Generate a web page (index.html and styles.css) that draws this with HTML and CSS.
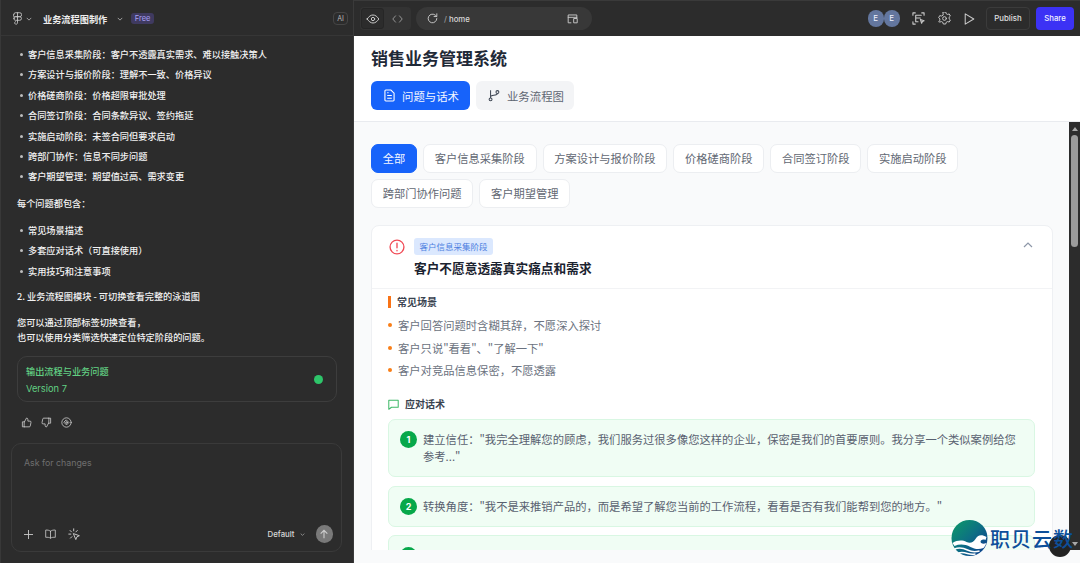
FILE: index.html
```html
<!DOCTYPE html>
<html lang="zh-CN">
<head>
<meta charset="utf-8">
<title>业务流程图制作</title>
<link rel="stylesheet" href="styles.css">
</head>
<body>
<div class="app">
  <aside class="side">
    <header class="side-head">
      <svg class="ic figma" viewBox="0 0 12 18" width="9" height="13"><path d="M1 3a2 2 0 0 1 2-2h6a2 2 0 0 1 0 5.500H3A2 2 0 0 1 1 3zM6 1v10.500M1 9a2 2 0 0 1 2-2.500h6a2.300 2.300 0 0 1 0 5H3A2.200 2.200 0 0 1 1 9zM6 11.500V15a2 2 0 1 1-3-1.800"/></svg>
      <svg class="chev" viewBox="0 0 8 5" width="6" height="4"><path d="M1 1l3 3 3-3"/></svg>
      <span class="proj">业务流程图制作</span>
      <svg class="chev chev-proj" viewBox="0 0 8 5" width="6" height="4"><path d="M1 1l3 3 3-3"/></svg>
      <span class="free">Free</span>
      <span class="ai">AI</span>
    </header>
    <div class="msg">
      <ul class="list">
        <li>客户信息采集阶段：客户不透露真实需求、难以接触决策人</li>
        <li>方案设计与报价阶段：理解不一致、价格异议</li>
        <li>价格磋商阶段：价格超限审批处理</li>
        <li>合同签订阶段：合同条款异议、签约拖延</li>
        <li>实施启动阶段：未签合同但要求启动</li>
        <li>跨部门协作：信息不同步问题</li>
        <li>客户期望管理：期望值过高、需求变更</li>
      </ul>
      <p class="para para-a">每个问题都包含：</p>
      <ul class="list list-b">
        <li>常见场景描述</li>
        <li>多套应对话术（可直接使用）</li>
        <li>实用技巧和注意事项</li>
      </ul>
      <p class="para para-c">2. 业务流程图模块 - 可切换查看完整的泳道图</p>
      <p class="para para-d">您可以通过顶部标签切换查看，<br>也可以使用分类筛选快速定位特定阶段的问题。</p>
      <div class="version">
        <div>
          <div class="v-title">输出流程与业务问题</div>
          <div class="v-num">Version 7</div>
        </div>
        <span class="v-dot"></span>
      </div>
      <div class="fb">
        <svg class="ic" viewBox="0 0 16 16" width="11" height="11"><path d="M5 7l3-5.500c1.300 0 2 .8 2 2V6h3a1.500 1.500 0 0 1 1.500 1.800l-1 5.200a1.500 1.500 0 0 1-1.500 1.300H5zM5 7H2v7.300h3"/></svg>
        <svg class="ic" viewBox="0 0 16 16" width="11" height="11"><path d="M11 9l-3 5.500c-1.300 0-2-.8-2-2V10H3a1.500 1.500 0 0 1-1.500-1.800l1-5.200A1.500 1.500 0 0 1 4 1.700h7zM11 9h3V1.700h-3"/></svg>
        <svg class="ic" viewBox="0 0 16 16" width="11" height="11"><circle cx="8" cy="8" r="6.800"/><path d="M8 4.500L11.500 8 8 11.500 4.500 8z"/><circle cx="8" cy="8" r="1.200"/></svg>
      </div>
    </div>
    <div class="ask">
      <div class="ask-ph">Ask for changes</div>
      <div class="ask-bar">
        <svg class="ic" viewBox="0 0 12 12" width="9" height="9"><path d="M6 .5v11M.5 6h11"/></svg>
        <svg class="ic" viewBox="0 0 16 14" width="11" height="10"><path d="M8 3C6.500 1.500 3.500 1 1 1.300v10.500C3.500 11.500 6.500 12 8 13c1.500-1 4.500-1.500 7-1.200V1.300C12.500 1 9.500 1.500 8 3zM8 3v10"/></svg>
        <svg class="ic" viewBox="0 0 16 16" width="13" height="13"><path d="M7 1v2.500M2.500 3l1.800 1.800M1 7.500h2.500M3 12.500l1.800-1.800M11.500 3L9.700 4.800M7 7l7 2.500-3 1.300-1.200 3z"/></svg>
        <span class="ask-gap"></span>
        <span class="def">Default</span>
        <svg class="chev" viewBox="0 0 8 5" width="5" height="3"><path d="M1 1l3 3 3-3"/></svg>
        <span class="send"><svg class="send-i" viewBox="0 0 12 12" width="10" height="10"><path d="M6 11V1.500M2 5.500l4-4 4 4"/></svg></span>
      </div>
    </div>
  </aside>
  <main class="main">
    <div class="top">
      <div class="seg">
        <span class="seg-on"><svg class="ic" viewBox="0 0 16 12" width="14" height="10"><path d="M1 6c2-3 4.300-4.800 7-4.800S13 3 15 6c-2 3-4.300 4.800-7 4.800S3 9 1 6z"/><circle cx="8" cy="6" r="2"/></svg></span>
        <span class="seg-off"><svg class="ic dim" viewBox="0 0 14 10" width="11" height="8"><path d="M4.500 1L1 5l3.500 4M9.500 1L13 5 9.500 9"/></svg></span>
      </div>
      <div class="addr">
        <svg class="ic" viewBox="0 0 14 14" width="11" height="11"><path d="M12.500 7a5.500 5.500 0 1 1-1.700-4L12.500 4.500M12.500 1v3.500H9"/></svg>
        <span class="path"><span class="slash">/</span> home</span>
        <svg class="ic addr-end" viewBox="0 0 14 14" width="11" height="11"><path d="M5 12.500H1.500v-10h11V6M1.500 5.500h11M9 7h4v5.500H9z"/></svg>
      </div>
      <span class="top-gap"></span>
      <div class="avs"><span class="av">E</span><span class="av av2">E</span></div>
      <svg class="ic tool" viewBox="0 0 14 14" width="13" height="13"><path d="M1 3.500V1h2.500M10.500 1H13v2.500M1 10.500V13h2.500M4 3.500h6M4 3.500v7h2.500M4 6.500h5M9 8l4 1.500-1.800.8-.8 1.800z"/></svg>
      <svg class="ic tool" viewBox="0 0 16 16" width="13" height="13"><path d="M6.500 1h3l.5 2 1.800 1 2-.6 1.400 2.600-1.500 1.400v2l1.500 1.400-1.400 2.600-2-.6-1.800 1-.5 2h-3l-.5-2-1.800-1-2 .6L.8 12.800l1.500-1.400v-2L.8 8 2.200 5.400l2 .6 1.800-1z" transform="translate(0 -1)"/><circle cx="8" cy="8" r="2.300"/></svg>
      <svg class="ic tool" viewBox="0 0 12 14" width="11" height="12"><path d="M1 1l10 6-10 6z"/></svg>
      <span class="btn-pub">Publish</span>
      <span class="btn-share">Share</span>
    </div>
    <div class="page-head">
      <h1 class="title">销售业务管理系统</h1>
      <div class="tabs">
        <span class="tab tab-on"><svg class="tab-i" viewBox="0 0 12 14" width="11" height="13"><path d="M1 2a1 1 0 0 1 1-1h5.500L11 4.500V12a1 1 0 0 1-1 1H2a1 1 0 0 1-1-1zM3.500 7h5M3.500 10h5M3.500 4h1.500"/></svg>问题与话术</span>
        <span class="tab"><svg class="tab-i" viewBox="0 0 14 14" width="12" height="13"><circle cx="3" cy="11.500" r="1.700"/><circle cx="11" cy="3" r="1.700"/><path d="M3 9.800V1M3 8.500c0-2.500 8-.8 8-3.800"/></svg>业务流程图</span>
      </div>
    </div>
    <div class="scroller">
      <div class="content">
        <div class="chips">
          <span class="chip chip-on">全部</span>
          <span class="chip">客户信息采集阶段</span>
          <span class="chip">方案设计与报价阶段</span>
          <span class="chip">价格磋商阶段</span>
          <span class="chip">合同签订阶段</span>
          <span class="chip">实施启动阶段</span>
          <span class="chip">跨部门协作问题</span>
          <span class="chip">客户期望管理</span>
        </div>
        <section class="card">
          <div class="card-head">
            <svg class="alert" viewBox="0 0 18 18" width="16" height="16"><circle cx="9" cy="9" r="7.800"/><path d="M9 4.800v5M9 12.800v.4"/></svg>
            <div class="card-title-wrap">
              <span class="badge">客户信息采集阶段</span>
              <h2 class="card-title">客户不愿意透露真实痛点和需求</h2>
            </div>
            <svg class="card-chev" viewBox="0 0 10 6" width="10" height="6"><path d="M1 5l4-4 4 4"/></svg>
          </div>
          <div class="card-body">
            <h3 class="sec sec-scene">常见场景</h3>
            <ul class="scene">
              <li>客户回答问题时含糊其辞，不愿深入探讨</li>
              <li>客户只说"看看"、"了解一下"</li>
              <li>客户对竞品信息保密，不愿透露</li>
            </ul>
            <h3 class="sec sec-talk"><svg class="talk-i" viewBox="0 0 14 14" width="11" height="11"><path d="M1 1.500h12v9H4.500L1 13z"/></svg>应对话术</h3>
            <div class="answers">
              <div class="ans ans-1"><span class="num">1</span><p>建立信任："我完全理解您的顾虑，我们服务过很多像您这样的企业，保密是我们的首要原则。我分享一个类似案例给您参考..."</p></div>
              <div class="ans"><span class="num">2</span><p>转换角度："我不是来推销产品的，而是希望了解您当前的工作流程，看看是否有我们能帮到您的地方。"</p></div>
              <div class="ans"><span class="num">3</span><p>价值交换："如果您方便，我可以先分享一些同行业的解决方案，您看看哪些对您有参考价值，然后我们再深入交流。"</p></div>
            </div>
          </div>
        </section>
      </div>
      <div class="sbar"><span class="sbar-up"></span><span class="sbar-thumb"></span><span class="sbar-down"></span></div>
    </div>
    <div class="foot"></div>
  </main>
</div>
<div class="mark">
  <svg class="mark-logo" viewBox="0 0 36 36" width="37" height="36">
    <defs><linearGradient id="g" x1="0" y1="0" x2="1" y2="1"><stop offset="0" stop-color="#0c9b66"/><stop offset=".5" stop-color="#0d6f84"/><stop offset="1" stop-color="#0c3590"/></linearGradient></defs>
    <circle cx="18" cy="18" r="18" fill="url(#g)"/>
    <path d="M1 23c5-3 10-3 14-1 4 2 7 0 9-3 2-4 6-5 11-2l-1 3c-3-1-5 0-5 2 1 2 3 2 6 1-1 2-2 4-3 5-5 2-9 1-13-1-6-3-11-3-16-1z" fill="#fff"/>
    <path d="M3 29c5-2 9-1 13 1 4 2 8 2 12 1M7 33c3-1 6-.5 9 .5 3 1 5 1 8 .5" fill="none" stroke="#fff" stroke-width="1.500"/>
  </svg>
  <span class="mark-dot"></span>
  <span class="mark-text">职贝云数</span>
</div>
</body>
</html>
```

FILE: styles.css
```css
* { box-sizing: border-box; }
html, body { margin: 0; padding: 0; height: 100%; overflow: hidden; }
body { font-family: Inter, "Noto Sans CJK SC", sans-serif; background: #2c2c2c; }
ul { margin: 0; padding: 0; list-style: none; }
p, h1, h2, h3 { margin: 0; }
svg { display: block; flex: none; }
.ic { fill: none; stroke: #c9c9c9; stroke-width: 1.200; stroke-linejoin: round; stroke-linecap: round; }
.dim { stroke: #9a9a9a; }
.chev { fill: none; stroke: #b5b5b5; stroke-width: 1.100; }

.app { display: flex; width: 1080px; height: 563px; position: relative; }

/* left panel */
.side { width: 354px; flex: none; display: flex; flex-direction: column; height: 563px; background: #2c2c2c; border-right: 1px solid #3a3a3a; border-left: 1px solid #383838; }
.side-head { height: 36px; display: flex; align-items: center; padding: 2px 5px 0 12px; border-bottom: 1px solid #363636; flex: none; }
.chev { margin-left: 4px; }
.proj { margin-left: 11px; font-size: 9.200px; font-weight: 700; color: #ececec; font-family: "Noto Sans CJK SC", sans-serif; white-space: nowrap; }
.chev-proj { margin-left: 10px; }
.free { margin-left: 8px; height: 11px; padding: 0 3.500px; font-size: 7.500px; line-height: 11px; color: #a9a0f5; background: #3f3a60; border-radius: 3px; }
.ai { margin-left: auto; width: 15px; height: 13px; border: 1px solid #454545; border-radius: 4px; font-size: 7px; line-height: 11px; text-align: center; color: #b5b5b5; }
.msg { flex: 1; padding: 8px 16px 0; font-family: "Noto Sans CJK SC", sans-serif; font-size: 9.200px; color: #f2f2f2; font-weight: 500; min-height: 0; }
.list li { height: 20.400px; line-height: 20.400px; padding-left: 11px; position: relative; white-space: nowrap; }
.list li::before { content: ""; position: absolute; left: 2.500px; top: 9px; width: 3px; height: 3px; border-radius: 50%; background: #bdbdbd; }
.para { line-height: 14.500px; white-space: nowrap; }
.para-a { margin-top: 9px; height: 15px; }
.list-b { margin-top: 9px; }
.para-c { margin-top: 8px; }
.para-d { margin-top: 12px; }
.version { margin-top: 12px; height: 46px; width: 320px; border: 1px solid #3d3d3d; border-radius: 10px; display: flex; align-items: center; justify-content: space-between; padding: 0 13px 0 8px; }
.v-title { font-size: 9.200px; line-height: 14px; color: #62d083; font-weight: 500; }
.v-num { font-family: Inter, sans-serif; font-size: 9.300px; line-height: 13px; margin-top: 4px; color: #62d083; font-weight: 400; }
.v-dot { width: 9px; height: 9px; border-radius: 50%; background: #2ec56a; }
.fb { display: flex; gap: 9px; padding: 15px 0 0 4px; }
.ask { flex: none; margin: 0 11px 11px 10px; height: 109px; border: 1px solid #3a3a3a; border-radius: 10px; padding: 12px 8px 8px 12px; display: flex; flex-direction: column; justify-content: space-between; }
.ask-ph { font-size: 8.800px; line-height: 13px; color: #6f6f6f; }
.ask-bar { display: flex; align-items: center; height: 18px; gap: 12px; }
.ask-gap { flex: 1; }
.def { font-size: 7.800px; color: #d9d9d9; font-weight: 500; margin-right: -7px; }
.ask-bar .chev { margin-left: 0; margin-right: -1px; }
.send { width: 17.500px; height: 17.500px; border-radius: 50%; background: #797979; display: flex; align-items: center; justify-content: center; }
.send-i { fill: none; stroke: #cfcfcf; stroke-width: 1.300; }

/* main */
.main { flex: 1; min-width: 0; display: flex; flex-direction: column; height: 563px; background: #f9fafb; position: relative; }
.top { height: 36px; flex: none; background: #2c2c2c; display: flex; align-items: center; padding: 0 6px 0 6px; border-top: 1px solid #3a3a3a; }
.seg { display: flex; background: #333; border-radius: 4px; height: 23px; width: 51px; padding: 1px; }
.seg-on { width: 23px; background: #2c2c2c; border: 1px solid #262626; border-radius: 3px; display: flex; align-items: center; justify-content: center; }
.seg-off { width: 26px; display: flex; align-items: center; justify-content: center; }
.addr { margin-left: 5px; width: 176px; height: 23px; border-radius: 12px; background: #383838; display: flex; align-items: center; padding: 0 14px 0 11px; }
.path { margin-left: 6px; font-size: 7.800px; color: #d8d8d8; font-weight: 500; }
.slash { color: #999; }
.addr-end { margin-left: auto; }
.top-gap { flex: 1; }
.avs { display: flex; }
.av { width: 16.500px; height: 16.500px; border-radius: 50%; background: #63769e; color: #f0f2ff; font-size: 8px; line-height: 16.500px; text-align: center; }
.av2 { margin-left: -0.500px; }
.tool { margin-left: 13px; }
.tool:first-of-type { margin-left: 12px; }
.btn-pub { margin-left: 11px; width: 44px; height: 23px; border: 1px solid #3b3b3b; border-radius: 4px; font-size: 7.800px; font-weight: 500; color: #e0e0e0; line-height: 21px; text-align: center; }
.btn-share { margin-left: 6px; width: 38px; height: 23px; background: #3c32f5; border-radius: 4px; font-size: 7.800px; font-weight: 500; color: #f2f2ff; line-height: 23px; text-align: center; }

.page-head { height: 86px; flex: none; background: #fff; border-bottom: 1px solid #e9ebef; padding: 9px 17px 0; font-family: "Noto Sans CJK SC", sans-serif; }
.title { font-size: 17px; line-height: 25px; font-weight: 700; color: #1f2937; }
.tabs { display: flex; gap: 6px; margin-top: 11px; }
.tab { height: 29px; padding: 0 10px 0 12px; display: flex; align-items: center; gap: 7px; border-radius: 6px; background: #f3f4f6; color: #5f6672; font-size: 11.400px; }
.tab-on { background: #1763fa; color: #f2f6ff; padding: 0 11px 0 13px; }
.tab-i { fill: none; stroke: #3f4754; stroke-width: 1.200; }
.tab-on .tab-i { stroke: #fff; }

.scroller { flex: 1; min-height: 0; display: flex; overflow: hidden; font-family: "Noto Sans CJK SC", sans-serif; }
.content { flex: 1; min-width: 0; padding: 22px 16px 0 17px; overflow: hidden; }
.sbar { width: 11px; flex: none; background: #2c2c2c; position: relative; padding-top: 13px; }
.sbar-up { position: absolute; left: 3px; top: 5px; width: 0; height: 0; border: 3px solid transparent; border-top: 0; border-bottom: 4px solid #a8a8a8; }
.sbar-down { position: absolute; left: 3px; bottom: 4px; width: 0; height: 0; border: 3px solid transparent; border-bottom: 0; border-top: 4px solid #a8a8a8; }
.sbar-thumb { display: block; width: 7px; margin-left: 2px; height: 112px; background: #9b9b9b; border-radius: 4px; }
.chips { display: flex; flex-wrap: wrap; gap: 6px; }
.chip { height: 29px; padding: 0 10.750px; border: 1px solid #eceef1; background: #fff; border-radius: 7px; font-size: 11.250px; line-height: 27px; color: #626873; }
.chip-on { background: #1763fa; border-color: #1763fa; color: #f3f6ff; }
.card { margin-top: 17px; width: 682px; background: #fff; border: 1px solid #eef0f3; border-radius: 8px; }
.card-head { height: 63px; border-bottom: 1px solid #f2f3f5; display: flex; padding: 12px 19px 0 17px; }
.alert { fill: none; stroke: #f04a55; stroke-width: 1.500; stroke-linecap: round; margin-top: 1px; }
.card-title-wrap { margin-left: 9px; }
.badge { display: block; width: 79px; height: 17px; background: #dbe8fe; border-radius: 3px; font-size: 8.500px; line-height: 17px; text-align: center; color: #4d7fe0; }
.card-title { font-size: 12.700px; line-height: 18px; font-weight: 700; color: #1b2330; margin-top: 3.500px; }
.card-chev { fill: none; stroke: #8d97a8; stroke-width: 1.200; margin-left: auto; margin-top: 4px; }
.card-body { padding: 5px 17px 0 16px; }
.sec { font-size: 10px; line-height: 14px; font-weight: 700; color: #3a4350; display: flex; align-items: center; }
.sec-scene { border-left: 3px solid #f97316; padding-left: 6px; height: 12px; margin-top: 2px; }
.scene { margin-top: 6px; }
.scene li { height: 22.700px; line-height: 22.700px; font-size: 11.300px; color: #6b7280; padding-left: 10px; position: relative; white-space: nowrap; }
.scene li::before { content: ""; position: absolute; left: 0; top: 9px; width: 4px; height: 4px; border-radius: 50%; background: #f97e16; }
.sec-talk { margin-top: 15.400px; gap: 6px; }
.talk-i { fill: none; stroke: #3fb968; stroke-width: 1.300; stroke-linejoin: round; }
.answers { margin-top: 8px; display: flex; flex-direction: column; gap: 8.500px; }
.ans { display: flex; background: #f0fdf4; border: 1px solid #d9f7e3; border-radius: 7px; padding: 11px 12px 11px 11px; gap: 6px; font-size: 11.300px; line-height: 17px; color: #596170; }
.ans p { margin: 0; }
.num { flex: none; width: 17px; height: 17px; border-radius: 50%; background: #07a84a; color: #fff; font-family: Inter, sans-serif; font-size: 9px; font-weight: 700; line-height: 17px; text-align: center; }

.foot { height: 13px; flex: none; background: #f9fafb; }

/* watermark */
.mark { position: absolute; left: 951px; top: 520px; display: flex; align-items: center; }
.mark-dot { position: absolute; left: 98px; top: 15px; width: 22px; height: 22px; border-radius: 50%; background: #232323; }
.mark-text { position: relative; font-family: "Noto Sans CJK SC", sans-serif; font-size: 20px; font-weight: 500; color: #0d4f9a; margin-left: 2px; letter-spacing: 1px; white-space: nowrap; }
```
